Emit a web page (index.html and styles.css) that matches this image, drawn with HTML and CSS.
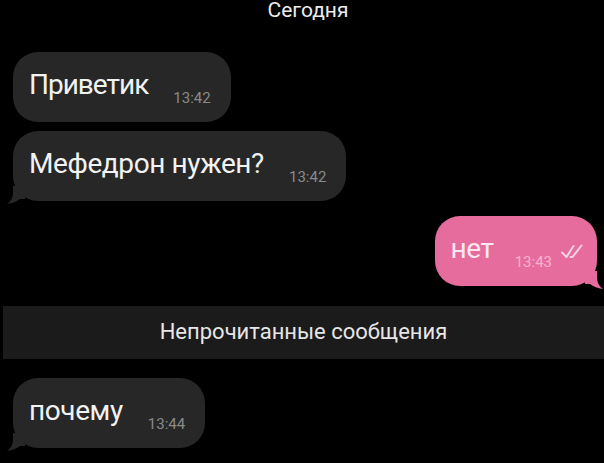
FILE: index.html
```html
<!DOCTYPE html>
<html lang="ru">
<head>
    <meta charset="UTF-8">
    <meta name="viewport" content="width=device-width, initial-scale=1.0">
    <title>Чат</title>
    <link rel="stylesheet" href="styles.css">
</head>
<body>
    <div class="chat">
        <div class="day">Сегодня</div>

        <div class="bubble in first">
            <span class="text">Приветик</span><span class="time">13:42</span>
        </div>

        <div class="bubble in tail">
            <span class="text">Мефедрон нужен?</span><span class="time">13:42</span>
            <svg class="tail-left" width="18" height="18" viewBox="0 0 18 18"><path d="M6 0 L6 7 Q6 14 0 18 Q8 17 13 13 L18 13 L18 0 Z"/></svg>
        </div>

        <div class="bubble out tail">
            <span class="text">нет</span><span class="time">13:43</span>
            <svg class="checks" width="22" height="15" viewBox="0 0 22 15"><path d="M1 8.5 L5.5 13 L12.5 2 M9.5 13 L11.5 13 L20.5 1.5"/></svg>
            <svg class="tail-right" width="18" height="18" viewBox="0 0 18 18"><path d="M12 0 L12 7 Q12 14 18 18 Q10 17 5 13 L0 13 L0 0 Z"/></svg>
        </div>

        <div class="unread">Непрочитанные сообщения</div>

        <div class="bubble in tail">
            <span class="text">почему</span><span class="time">13:44</span>
            <svg class="tail-left" width="18" height="18" viewBox="0 0 18 18"><path d="M6 0 L6 7 Q6 14 0 18 Q8 17 13 13 L18 13 L18 0 Z"/></svg>
        </div>
    </div>
</body>
</html>
```

FILE: styles.css
```css
html, body {
    margin: 0;
    padding: 0;
    height: 100%;
    overflow: hidden;
    background: #000;
}

body {
    font-family: Roboto, "Noto Sans", sans-serif;
    color: #f2f2f2;
}

.chat {
    display: flex;
    flex-direction: column;
    padding: 0 7px 0 13px;
}

.day {
    align-self: center;
    font-size: 21px;
    line-height: 24px;
    margin-top: -2px;
    margin-left: 6px;
    color: #ececec;
}

.bubble {
    position: relative;
    align-self: flex-start;
    box-sizing: border-box;
    height: 70px;
    padding: 15px 20px 0 16px;
    border-radius: 25px;
    background: #272727;
    white-space: nowrap;
}

.bubble .text {
    font-size: 28px;
    line-height: 36px;
    letter-spacing: -0.4px;
}

.bubble .time {
    display: inline-block;
    margin-left: 25px;
    font-size: 15px;
    line-height: 16px;
    vertical-align: -9px;
    color: #8a8a8a;
}

.in + .in {
    margin-top: 9px;
}

.first {
    margin-top: 30px;
}

.first .text {
    letter-spacing: -1px;
}

.out {
    align-self: flex-end;
    margin-top: 15px;
    padding-left: 16px;
    padding-right: 14px;
    background: #e76c9e;
}

.out .text {
    color: #fde8f0;
}

.out .time {
    margin-left: 21px;
    color: #f5b3cd;
}

.checks {
    margin-left: 5px;
    vertical-align: -1px;
    fill: none;
    stroke: #f8d3e2;
    stroke-width: 2;
    stroke-linecap: round;
    stroke-linejoin: round;
}

.tail-left, .tail-right {
    position: absolute;
    bottom: -3px;
}

.tail-left {
    left: -6px;
    fill: #272727;
}

.tail-right {
    right: -6px;
    fill: #e76c9e;
}

.unread {
    box-sizing: border-box;
    height: 53px;
    margin: 20px -7px 0 -10px;
    padding-top: 14px;
    background: #1b1b1b;
    text-align: center;
    font-size: 22px;
    line-height: 24px;
    color: #e6e6e6;
}

.unread + .bubble {
    margin-top: 19px;
}
```
